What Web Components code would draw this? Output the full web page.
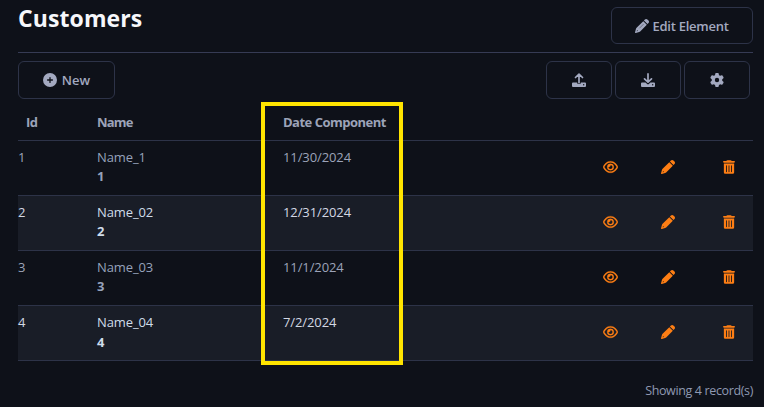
<!DOCTYPE html>
<html lang="en">
<head>
<meta charset="utf-8">
<title>Customers</title>
<style>
html,body{margin:0;background:#0e1119}
body{width:764px;height:407px;overflow:hidden;font-family:"Open Sans","Noto Sans",sans-serif;font-size:13px;color:#9ca3b8}
</style>
</head>
<body>
<customers-page></customers-page>
<script>
const PENCIL_HEAD='M362.7 18.700L326 55.400 456 185.400 493.300 148.700c25-25 25-65.500 0-90.500L453.300 18.700c-25-25-65.500-25-90.500 0z';
const PENCIL_BODY='M303 78.400L58.600 322.900c-10.400 10.400-18 23.300-22.200 37.400L1 480.700c-2.500 8.400-.2 17.500 6.100 23.700s15.300 8.500 23.700 6.100l120.300-35.400c14.100-4.200 27-11.800 37.400-22.200L433 208.400zM75 405L107 437 62 450z';
const ICONS={
 plus:['0 0 512 512','<path fill-rule="evenodd" d="M256 512A256 256 0 1 0 256 0a256 256 0 1 0 0 512zM232 344V280H168c-13.3 0-24-10.7-24-24s10.7-24 24-24h64V168c0-13.3 10.7-24 24-24s24 10.7 24 24v64h64c13.3 0 24 10.7 24 24s-10.7 24-24 24H280v64c0 13.3-10.7 24-24 24s-24-10.7-24-24z"/>'],
 pencil:['0 0 512 512','<path fill-rule="evenodd" d="'+PENCIL_HEAD+PENCIL_BODY+'"/><path d="M303 197L170 330" stroke="#0e1119" stroke-opacity=".6" stroke-width="22" stroke-linecap="round"/>'],
 edit:['0 0 512 512','<path fill-rule="evenodd" d="'+PENCIL_HEAD+PENCIL_BODY+'"/>'],
 eye:['0 0 576 512','<path stroke="currentColor" stroke-width="10" d="M288 80c-65.2 0-118.8 29.6-159.9 67.7C89.6 183.5 63 226 49.4 256c13.6 30 40.2 72.5 78.6 108.3C169.2 402.4 222.8 432 288 432s118.8-29.6 159.9-67.7C486.4 328.5 513 286 526.6 256c-13.6-30-40.2-72.5-78.6-108.3C406.8 109.6 353.2 80 288 80zM95.4 112.6C142.5 68.8 207.2 32 288 32s145.5 36.8 192.6 80.6c46.8 43.5 78.1 95.4 93 131.1c3.3 7.9 3.3 16.7 0 24.6c-14.9 35.7-46.2 87.7-93 131.1C433.5 443.2 368.8 480 288 480s-145.5-36.8-192.6-80.6C48.6 356 17.3 304 2.5 268.3c-3.3-7.9-3.3-16.7 0-24.6C17.3 208 48.6 156 95.4 112.6zM288 336c44.2 0 80-35.8 80-80s-35.8-80-80-80c-.7 0-1.3 0-2 0c1.3 5.1 2 10.5 2 16c0 35.3-28.7 64-64 64c-5.5 0-10.9-.7-16-2c0 .7 0 1.3 0 2c0 44.2 35.8 80 80 80zm0-208a128 128 0 1 1 0 256 128 128 0 1 1 0-256z"/>'],
 trash:['0 0 448 512','<path fill-rule="evenodd" d="M135.2 17.7C140.6 6.8 151.7 0 163.8 0H284.2c12.1 0 23.2 6.8 28.6 17.7L320 32h96c17.7 0 32 14.3 32 32s-14.3 32-32 32H32C14.3 96 0 81.7 0 64S14.3 32 32 32h96l7.2-14.3zM32 128H416V448c0 35.3-28.7 64-64 64H96c-35.3 0-64-28.7-64-64V128zm96 64c-8.800 0-16 7.200-16 16V432c0 8.800 7.200 16 16 16s16-7.200 16-16V208c0-8.800-7.200-16-16-16zm96 0c-8.800 0-16 7.200-16 16V432c0 8.800 7.200 16 16 16s16-7.200 16-16V208c0-8.800-7.200-16-16-16zm96 0c-8.800 0-16 7.200-16 16V432c0 8.800 7.200 16 16 16s16-7.200 16-16V208c0-8.800-7.200-16-16-16z"/>'],
 up:['0 0 14 14','<path fill-rule="evenodd" d="M1 9.500H5.200V10a1.100 1.100 0 0 0 1.100 1.100H7.700A1.100 1.100 0 0 0 8.800 10V9.500H13a1 1 0 0 1 1 1V13a1 1 0 0 1-1 1H1a1 1 0 0 1-1-1V10.500a1 1 0 0 1 1-1zM11.700 11.100a.7.700 0 1 0 0 1.400.7.700 0 0 0 0-1.400z"/><path d="M7 9.700V1.300M3.500 4.500L7 1.200l3.500 3.300" fill="none" stroke="currentColor" stroke-width="1.700" stroke-linecap="round" stroke-linejoin="round"/>'],
 down:['0 0 14 14','<path fill-rule="evenodd" d="M1 9.500H4.500L6.200 11.100a1.150 1.150 0 0 0 1.600 0L9.500 9.500H13a1 1 0 0 1 1 1V13a1 1 0 0 1-1 1H1a1 1 0 0 1-1-1V10.500a1 1 0 0 1 1-1zM11.700 11.100a.7.700 0 1 0 0 1.400.7.700 0 0 0 0-1.400z"/><path d="M7 .9V9M3.500 5.900L7 9.200l3.500-3.300" fill="none" stroke="currentColor" stroke-width="1.700" stroke-linecap="round" stroke-linejoin="round"/>'],
 gear:['0 0 512 512','<path fill-rule="evenodd" d="M495.9 166.6c3.2 8.7 .5 18.4-6.4 24.6l-43.3 39.4c1.1 8.3 1.7 16.8 1.7 25.4s-.6 17.1-1.7 25.4l43.3 39.4c6.9 6.2 9.6 15.9 6.4 24.6c-4.4 11.9-9.7 23.3-15.8 34.3l-4.7 8.1c-6.6 11-14 21.4-22.1 31.2c-5.9 7.2-15.7 9.6-24.5 6.8l-55.7-17.7c-13.4 10.3-28.2 18.9-44 25.4l-12.5 57.1c-2 9.1-9 16.3-18.2 17.8c-13.8 2.3-28 3.5-42.5 3.5s-28.7-1.2-42.5-3.5c-9.2-1.5-16.2-8.7-18.2-17.8l-12.500-57.100c-15.800-6.500-30.600-15.100-44-25.400L83.100 425.900c-8.800 2.800-18.600 .3-24.500-6.800c-8.100-9.800-15.500-20.200-22.100-31.200l-4.700-8.100c-6.100-11-11.400-22.400-15.800-34.300c-3.200-8.700-.5-18.400 6.400-24.600l43.300-39.400C64.600 273.100 64 264.600 64 256s.6-17.100 1.700-25.400L22.400 191.200c-6.900-6.200-9.600-15.900-6.400-24.600c4.400-11.900 9.700-23.300 15.800-34.300l4.700-8.100c6.600-11 14-21.400 22.100-31.200c5.900-7.200 15.700-9.600 24.500-6.800l55.700 17.700c13.400-10.300 28.200-18.900 44-25.400l12.500-57.100c2-9.100 9-16.300 18.200-17.800C227.300 1.200 241.500 0 256 0s28.700 1.200 42.500 3.500c9.200 1.500 16.200 8.700 18.200 17.800l12.500 57.100c15.800 6.500 30.600 15.100 44 25.400l55.700-17.700c8.800-2.800 18.600-.3 24.500 6.800c8.100 9.800 15.500 20.200 22.100 31.200l4.700 8.100c6.100 11 11.400 22.400 15.800 34.300zM256 336a80 80 0 1 0 0-160 80 80 0 1 0 0 160z"/>']
};
class UiIcon extends HTMLElement{
 constructor(){super();this.attachShadow({mode:'open'})}
 connectedCallback(){
  const [vb,body]=ICONS[this.getAttribute('name')];
  this.shadowRoot.innerHTML=`<style>:host{display:block;flex:none;width:14px;height:14px}svg{display:block;width:100%;height:100%}</style><svg viewBox="${vb}" fill="currentColor">${body}</svg>`;
 }
}
customElements.define('ui-icon',UiIcon);

class UiButton extends HTMLElement{
 constructor(){super();this.attachShadow({mode:'open'}).innerHTML=`<style>
 :host{display:block;box-sizing:border-box}
 button{all:unset;box-sizing:border-box;width:100%;height:100%;display:flex;align-items:center;justify-content:center;gap:var(--gap,5px);border:1px solid #2d3348;border-radius:6px;font-weight:600;color:#a3a9c0;white-space:nowrap;letter-spacing:var(--track,0)}
 </style><button><slot></slot></button>`}
}
customElements.define('ui-button',UiButton);

class CustomerRow extends HTMLElement{
 constructor(){super();this.attachShadow({mode:'open'})}
 connectedCallback(){
  const a=n=>this.getAttribute(n);
  this.shadowRoot.innerHTML=`<style>
  :host{box-sizing:border-box;height:55px;display:grid;grid-template-columns:79px 186px 320px 58px 61px 1fr;border-bottom:1px solid #2d3348;line-height:19px;padding-top:7px;color:#9ca3b8}
  :host([striped]){background:#191d27;color:#d3d8e4}
  span{letter-spacing:-.1px}
  .name{color:#96a2bb}
  :host([striped]) .name{color:#cfdcea}
  b{display:block;font-weight:700}
  :host(:last-of-type) b{padding-top:1px}
  ui-icon{color:#fd7e14;margin-top:12px}
  .eye{width:15px}.trash{width:12px;margin-left:1px}
  </style><span>${a('rid')}</span><span class="name">${a('name')}<b>${a('rid')}</b></span><span>${a('date')}</span>
  <ui-icon class="eye" name="eye"></ui-icon><ui-icon name="edit"></ui-icon><ui-icon class="trash" name="trash"></ui-icon>`;
 }
}
customElements.define('customer-row',CustomerRow);

class CustomersTable extends HTMLElement{
 constructor(){super();this.attachShadow({mode:'open'}).innerHTML=`<style>
 :host{display:block;position:relative}
 header{box-sizing:border-box;height:38px;display:grid;grid-template-columns:79px 186px 1fr;align-items:center;font-weight:700;letter-spacing:-.5px;border-bottom:1px solid #2d3348;padding-top:1px}
 header span:first-child{padding-left:8px}
 header span:nth-child(2){letter-spacing:-.8px}
 .highlight{position:absolute;box-sizing:border-box;left:243px;top:-1px;width:142px;height:263px;border:4px solid #ffe400;pointer-events:none}
 </style><header><span>Id</span><span>Name</span><span>Date Component</span></header><slot></slot><div class="highlight"></div>`}
}
customElements.define('customers-table',CustomersTable);

class CustomersPage extends HTMLElement{
 constructor(){super();this.attachShadow({mode:'open'}).innerHTML=`<style>
 :host{display:block;padding:0 11px 0 18px}
 .head{box-sizing:border-box;height:53px;border-bottom:1px solid #363b54;display:flex;justify-content:space-between;align-items:flex-start;padding-top:7px}
 h1{margin:-6px 0 0;font-size:23px;line-height:34px;font-weight:700;letter-spacing:.1px;color:#f6f7fb}
 .edit{width:142px;height:37px;--gap:3px;--track:-.25px}
 .bar{display:flex;gap:3px;padding:8px 3px 0 0;height:42px}
 .bar ui-button{width:66px;height:38px}
 .bar .new{width:97px;margin-right:auto}
 .foot{text-align:right;padding-top:20px;line-height:19px;font-size:12.5px;letter-spacing:-.36px;color:#8f99b2}
 </style>
 <div class="head"><h1>Customers</h1><ui-button class="edit"><ui-icon name="pencil"></ui-icon><span>Edit Element</span></ui-button></div>
 <div class="bar"><ui-button class="new"><ui-icon name="plus"></ui-icon><span>New</span></ui-button><ui-button><ui-icon name="up"></ui-icon></ui-button><ui-button><ui-icon name="down"></ui-icon></ui-button><ui-button><ui-icon name="gear"></ui-icon></ui-button></div>
 <customers-table>
 <customer-row rid="1" name="Name_1" date="11/30/2024"></customer-row>
 <customer-row striped rid="2" name="Name_02" date="12/31/2024"></customer-row>
 <customer-row rid="3" name="Name_03" date="11/1/2024"></customer-row>
 <customer-row striped rid="4" name="Name_04" date="7/2/2024"></customer-row>
 </customers-table>
 <div class="foot">Showing 4 record(s)</div>`}
}
customElements.define('customers-page',CustomersPage);
</script>
</body>
</html>
